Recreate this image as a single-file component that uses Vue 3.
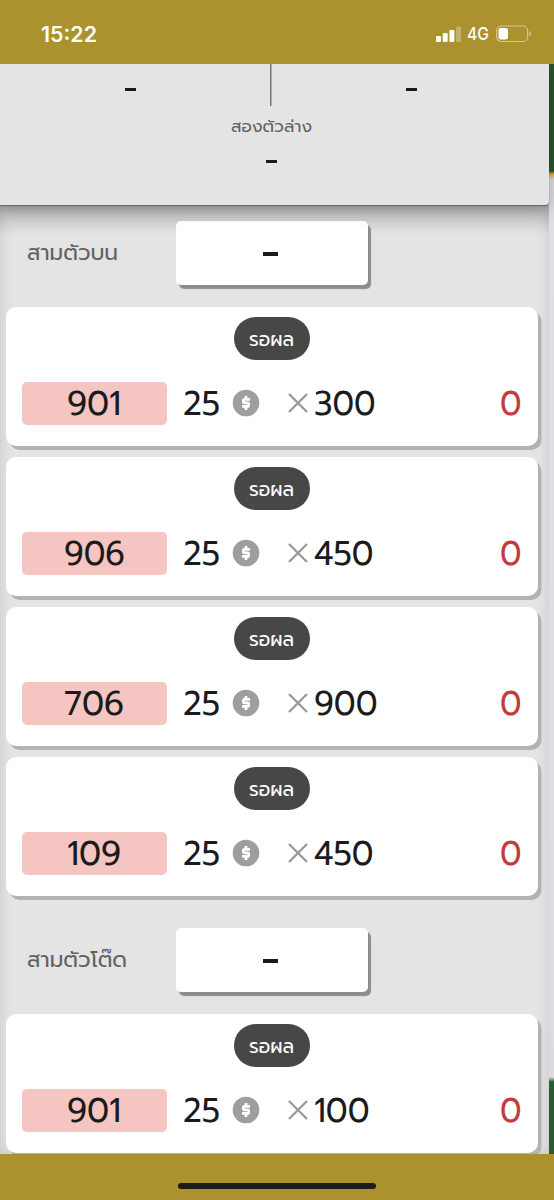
<script setup>
import { h } from 'vue'

// Single line of text set to a fixed advance width.
const FitText = ({ text, w, height, base, size }) =>
  h('svg', { width: w, height, viewBox: `0 0 ${w} ${height}` }, [
    h('text', { x: 0, y: base, 'font-size': size, textLength: w, lengthAdjust: 'spacingAndGlyphs' }, text)
  ])
FitText.props = ['text', 'w', 'height', 'base', 'size']

const sections = [
  {
    title: 'สามตัวบน',
    titleWidth: 91,
    bets: [
      { number: '901', nw: 54, rate: '300', rw: 61.5 },
      { number: '906', nw: 61, rate: '450', rw: 59.5 },
      { number: '706', nw: 60, rate: '900', rw: 63.5 },
      { number: '109', nw: 54, rate: '450', rw: 59.5 }
    ]
  },
  {
    title: 'สามตัวโต๊ด',
    titleWidth: 100,
    bets: [{ number: '901', nw: 54, rate: '100', rw: 55.5 }]
  }
]
</script>

<template>
  <div class="screen">
    <header class="status">
      <FitText class="clock" text="15:22" :w="56" :height="28" :base="22" :size="21" />
      <div class="indicators">
        <svg class="signal" width="26" height="18" viewBox="0 0 26 18">
          <rect x="0" y="11" width="5" height="6" rx="1.3" />
          <rect x="6.7" y="8" width="5" height="9" rx="1.3" />
          <rect x="13.4" y="5" width="5" height="12" rx="1.3" />
          <rect x="20" y="1.5" width="5" height="15.5" rx="1.3" opacity=".3" />
        </svg>
        <FitText class="network" text="4G" :w="22" :height="22" :base="17" :size="17.5" />
        <svg class="battery" width="36" height="18" viewBox="0 0 36 18">
          <rect x=".6" y="1" width="31" height="15.5" rx="4.5" fill="none" stroke="#fff" stroke-opacity=".5" stroke-width="1.1" />
          <rect x="2.5" y="3" width="9.5" height="11.5" rx="2.3" fill="#fff" />
          <path d="M33.3 6.3c2.3.8 2.3 4.2 0 5z" fill="#fff" opacity=".5" />
        </svg>
      </div>
    </header>

    <main class="viewport">
      <div class="sheet">
        <section class="results">
          <div class="top-results">
            <span class="result"><i class="dash"></i></span>
            <span class="result"><i class="dash"></i></span>
          </div>
          <FitText class="caption" text="สองตัวล่าง" :w="81" :height="32" :base="21.5" :size="17" />
          <i class="dash"></i>
        </section>

        <div class="list">
          <section v-for="s in sections" :key="s.title" class="group">
            <div class="group-head">
              <FitText class="group-title" :text="s.title" :w="s.titleWidth" :height="44" :base="29" :size="22" />
              <div class="answer"><i class="dash big"></i></div>
            </div>
            <article v-for="b in s.bets" :key="b.number" class="card">
              <div class="pill"><FitText text="รอผล" :w="45" :height="32" :base="23" :size="19" /></div>
              <div class="row">
                <div class="number"><FitText :text="b.number" :w="b.nw" :height="42" :base="32.5" :size="33.5" /></div>
                <FitText class="stake" text="25" :w="37" :height="42" :base="32.5" :size="33.5" />
                <svg class="coin" width="28" height="28" viewBox="0 0 28 28">
                  <circle cx="14" cy="14" r="13.3" fill="#9e9e9e" />
                  <path d="M18 10.4h-5.5q-1.2 0-1.2 1.2v1q0 1.2 1.2 1.2h3q1.2 0 1.2 1.2v1.2q0 1.2-1.2 1.2H10" fill="none" stroke="#fff" stroke-width="2.7" />
                  <path d="M12.6 7h2.8v3h-2.8zM12.6 18h2.8v3h-2.8z" fill="#fff" />
                </svg>
                <svg class="times" width="20" height="20" viewBox="0 0 20 20">
                  <path d="M1 1l18 18M19 1l-18 18" stroke="#999" stroke-width="2.3" />
                </svg>
                <FitText class="rate" :text="b.rate" :w="b.rw" :height="42" :base="32.5" :size="33.5" />
                <FitText class="win" text="0" :w="21.5" :height="42" :base="32.5" :size="33.5" />
              </div>
            </article>
          </section>
        </div>
      </div>
      <div class="backdrop"></div>
    </main>

    <footer class="home"><i></i></footer>
  </div>
</template>

<style>
body {
  margin: 0;
}
</style>

<style scoped>
.screen {
  width: 554px;
  height: 1200px;
  display: flex;
  flex-direction: column;
  overflow: hidden;
  font-family: Prompt, "Noto Sans", "Noto Sans Thai", sans-serif;
  font-weight: 400;
  color: #1b1b1d;
}
svg {
  display: block;
  flex: none;
  fill: currentColor;
  overflow: visible;
}
.status {
  height: 64px;
  flex: none;
  box-sizing: border-box;
  padding: 3px 22px 0 41px;
  display: flex;
  align-items: center;
  justify-content: space-between;
  background: #ab922f;
  color: #fff;
  font-family: Inter, sans-serif;
}
.clock {
  font-weight: 600;
}
.network {
  font-weight: 500;
}
.indicators {
  display: flex;
  align-items: center;
}
.network {
  margin: 0 7px 0 5px;
}
.viewport {
  height: 1090px;
  flex: none;
  display: flex;
  overflow: hidden;
}
.sheet {
  width: 549px;
  height: 1090px;
  background: #dadada;
}
.backdrop {
  flex: 1;
  background: linear-gradient(#27562d 0 107px, #e0aa3c 110px, #dfdfe3 116px, #dcdce0 1013px, #2a5a32 1018px);
}
.results {
  position: relative;
  z-index: 1;
  height: 141px;
  box-sizing: border-box;
  display: flex;
  flex-direction: column;
  align-items: center;
  background: #e4e4e4;
  border-radius: 0 0 4px;
  padding-right: 7px;
  box-shadow: 0 1px 1px #666, 0 3px 18px #0004;
}
.top-results {
  width: 562px;
  height: 42px;
  display: flex;
  background: linear-gradient(#777, #777) center / 1.5px 100% no-repeat;
}
.result {
  flex: 1;
  display: flex;
  justify-content: center;
  padding-top: 24px;
}
.dash {
  display: block;
  width: 11px;
  height: 3px;
  background: #1b1b1d;
}
.caption {
  margin-top: 4px;
  color: #626262;
}
.caption + .dash {
  margin-top: 18px;
}
.list {
  height: 949px;
  background: linear-gradient(#0003, #0000 30px) #e4e4e4;
  box-shadow: inset 0 0 14px #0002;
}
.group {
  padding: 16px 0 0 5.5px;
}
.group + .group {
  padding-top: 21px;
}
.group-head {
  display: flex;
  align-items: center;
  height: 64px;
  margin-bottom: 22px;
  padding-left: 21px;
}
.group-title {
  color: #626262;
  margin-right: auto;
}
.answer {
  width: 192px;
  height: 64px;
  margin-right: 181px;
  display: flex;
  align-items: center;
  justify-content: center;
  background: #fff;
  border-radius: 5px;
  box-shadow: 3px 4px 1px #8c8c8c;
}
.dash.big {
  width: 15px;
  height: 3.5px;
  margin: 2px 3px 0 0;
}
.card {
  width: 532px;
  height: 139px;
  margin-bottom: 11px;
  box-sizing: border-box;
  padding: 10px 16px 0 16px;
  background: #fff;
  border-radius: 10px;
  box-shadow: 3.5px 4px 0.5px #b3b3b3;
}
.pill {
  width: 76px;
  height: 43px;
  margin: 0 auto;
  display: flex;
  align-items: center;
  justify-content: center;
  background: #474747;
  color: #fff;
  border-radius: 22px;
}
.row {
  display: flex;
  align-items: center;
  height: 43px;
  margin-top: 21.5px;
}
.number {
  width: 145px;
  height: 43px;
  flex: none;
  display: flex;
  align-items: center;
  justify-content: center;
  background: #f5c5c2;
  border-radius: 5px;
}
.stake {
  margin-left: 16px;
}
.coin {
  margin-left: 12px;
}
.times {
  margin-left: 28px;
}
.rate {
  margin-left: 6px;
}
.win {
  margin-left: auto;
  color: #c23b3d;
}
.home {
  height: 46px;
  flex: none;
  background: #ab922f;
  display: flex;
  justify-content: center;
}
.home i {
  width: 198px;
  height: 6.5px;
  margin-top: 28.5px;
  border-radius: 4px;
  background: #1c1c1a;
}
</style>
